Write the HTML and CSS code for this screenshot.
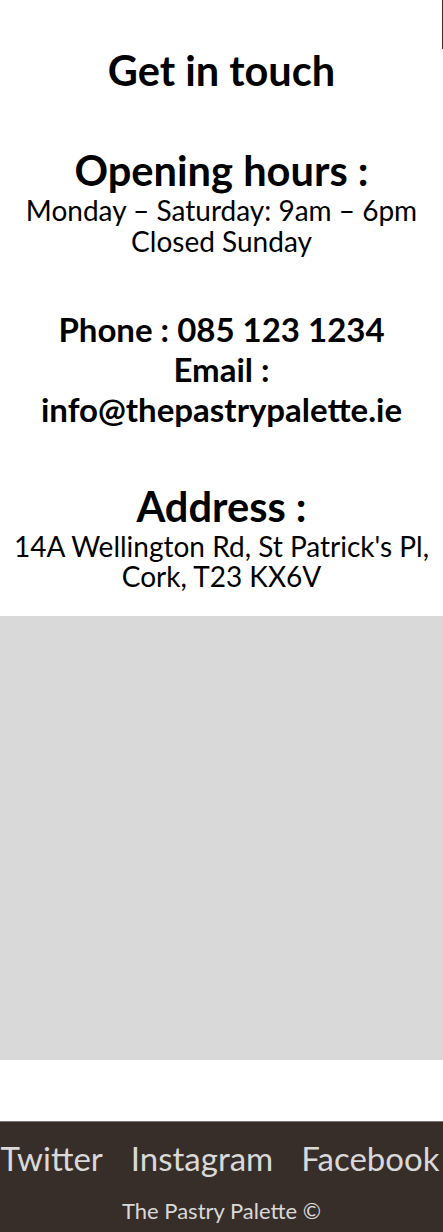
FILE: index.html
```html
<!DOCTYPE html>
<html lang="en">
<head>
<meta charset="utf-8">
<title>Contact - The Pastry Palette</title>
<link rel="stylesheet" href="styles.css">
</head>
<body>
<div class="menu-drawer"></div>
<main class="contact">
  <h1 class="title">Get in touch</h1>
  <section class="block">
    <h2 class="heading">Opening hours :</h2>
    <p class="text">Monday – Saturday: 9am – 6pm<br>Closed Sunday</p>
  </section>
  <section class="block">
    <p class="text strong">Phone : 085 123 1234</p>
    <p class="text strong">Email : info@thepastrypalette.ie</p>
  </section>
  <section class="block">
    <h2 class="heading">Address :</h2>
    <p class="text">14A Wellington Rd, St Patrick's Pl, Cork, T23 KX6V</p>
  </section>
  <div class="map"></div>
</main>
<footer class="footer">
  <nav class="social">
    <a class="social-link" href="#">Twitter</a>
    <a class="social-link" href="#">Instagram</a>
    <a class="social-link" href="#">Facebook</a>
  </nav>
  <p class="copy">The Pastry Palette ©</p>
</footer>
</body>
</html>
```
FILE: styles.css
```css
html, body {
  margin: 0;
  padding: 0;
}
body {
  font-family: Lato, "Open Sans", sans-serif;
  color: #000;
  background: #fff;
  position: relative;
}
.menu-drawer {
  position: absolute;
  top: 0;
  left: 442px;
  width: 1px;
  height: 49px;
  background: #382e29;
}
.contact {
  text-align: center;
  padding-top: 45px;
  padding-bottom: 61px;
}
.title {
  font-size: 41.5px;
  font-weight: 700;
  line-height: 50px;
  margin: 0 0 50px;
}
.block {
  margin-bottom: 52px;
}
.block:last-of-type {
  margin-bottom: 25px;
}
.heading {
  font-size: 41.6px;
  font-weight: 700;
  line-height: 50px;
  margin: 0;
}
.text {
  font-size: 28px;
  line-height: 31px;
  margin: 0;
}
.block:last-of-type .text {
  line-height: 30px;
}
.strong {
  font-weight: 700;
  font-size: 33px;
  line-height: 40px;
}
.map {
  height: 444px;
  background: #d9d9d9;
}
.footer {
  background: #382e29;
  border-top: 1px solid #7d7571;
  text-align: center;
  color: #d9d9d9;
  padding: 16px 0 8px;
}
.social {
  display: flex;
  justify-content: center;
  gap: 28px;
  padding-right: 3px;
  white-space: nowrap;
}
.social-link {
  color: #d9d9d9;
  text-decoration: none;
  font-size: 33px;
  line-height: 40px;
}
.copy {
  margin: 20px 0 0;
  font-size: 22px;
  line-height: 26px;
}
```
